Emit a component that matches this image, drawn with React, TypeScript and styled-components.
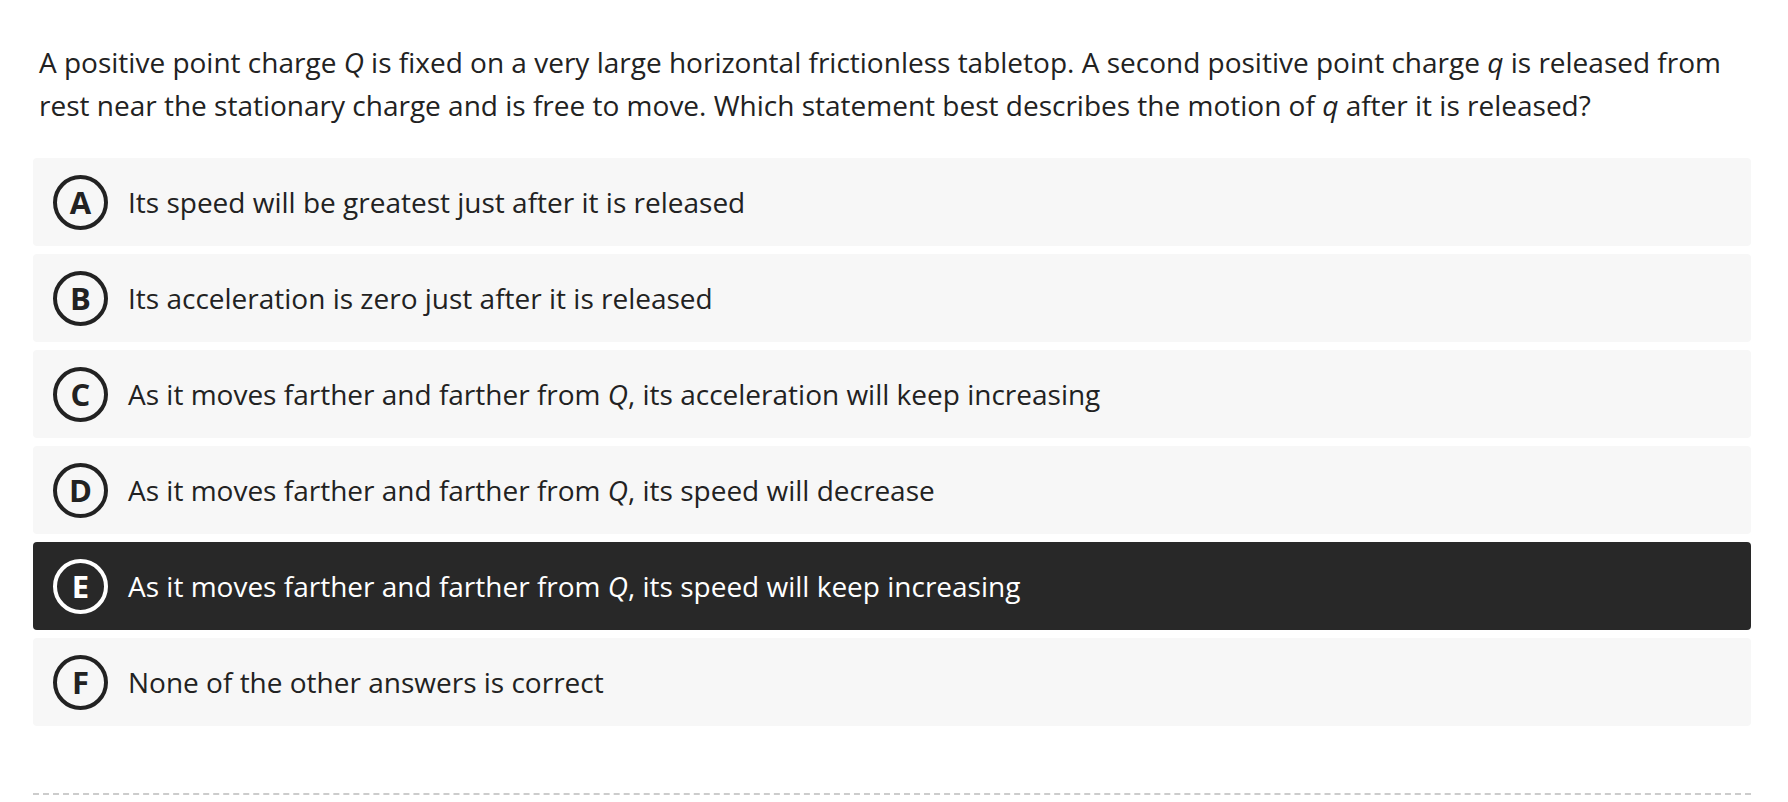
import React from "react";
import styled, { createGlobalStyle } from "styled-components";

const Global = createGlobalStyle`
  html, body { margin: 0; padding: 0; background: #ffffff; }
  body { font-family: "Open Sans", "Noto Sans", sans-serif; color: #222222; }
`;

const Page = styled.main`
  width: 1718px;
  padding: 41px 0 0 33px;
`;

const Question = styled.p`
  margin: 0 0 32px 0;
  padding: 0 6px;
  font-size: 28px;
  line-height: 42.7px;
  color: #222222;
`;

const Options = styled.ol`
  list-style: none;
  margin: 0;
  padding: 0;
  display: flex;
  flex-direction: column;
  gap: 8px;
`;

const Option = styled.li<{ $selected?: boolean }>`
  height: 88px;
  display: flex;
  align-items: center;
  gap: 20px;
  padding-left: 20px;
  border-radius: 4px;
  background: ${(p) => (p.$selected ? "#282828" : "#f7f7f7")};
  color: ${(p) => (p.$selected ? "#ffffff" : "#222222")};
`;

const Letter = styled.span<{ $selected?: boolean }>`
  box-sizing: border-box;
  width: 55px;
  height: 55px;
  flex: 0 0 55px;
  border-radius: 50%;
  border: 4px solid ${(p) => (p.$selected ? "#ffffff" : "#222222")};
  display: flex;
  align-items: center;
  justify-content: center;
  font-weight: 700;
  font-size: 31px;
  line-height: 1;
`;

const Label = styled.span`
  font-size: 28px;
  line-height: 1.4;
`;

const Divider = styled.hr`
  margin: 67px 0 0 0;
  border: 0;
  border-top: 2px dashed #cccccc;
  height: 0;
`;

const options: { key: string; text: React.ReactNode }[] = [
  { key: "A", text: "Its speed will be greatest just after it is released" },
  { key: "B", text: "Its acceleration is zero just after it is released" },
  {
    key: "C",
    text: (
      <>
        As it moves farther and farther from <i>Q</i>, its acceleration will keep increasing
      </>
    ),
  },
  {
    key: "D",
    text: (
      <>
        As it moves farther and farther from <i>Q</i>, its speed will decrease
      </>
    ),
  },
  {
    key: "E",
    text: (
      <>
        As it moves farther and farther from <i>Q</i>, its speed will keep increasing
      </>
    ),
  },
  { key: "F", text: "None of the other answers is correct" },
];

export default function App() {
  const selected = "E";
  return (
    <Page>
      <Global />
      <Question>
        A positive point charge <i>Q</i> is fixed on a very large horizontal frictionless tabletop. A second
        positive point charge <i>q</i> is released from rest near the stationary charge and is free to move.
        Which statement best describes the motion of <i>q</i> after it is released?
      </Question>
      <Options>
        {options.map((o) => (
          <Option key={o.key} $selected={o.key === selected}>
            <Letter $selected={o.key === selected}>{o.key}</Letter>
            <Label>{o.text}</Label>
          </Option>
        ))}
      </Options>
      <Divider />
    </Page>
  );
}
